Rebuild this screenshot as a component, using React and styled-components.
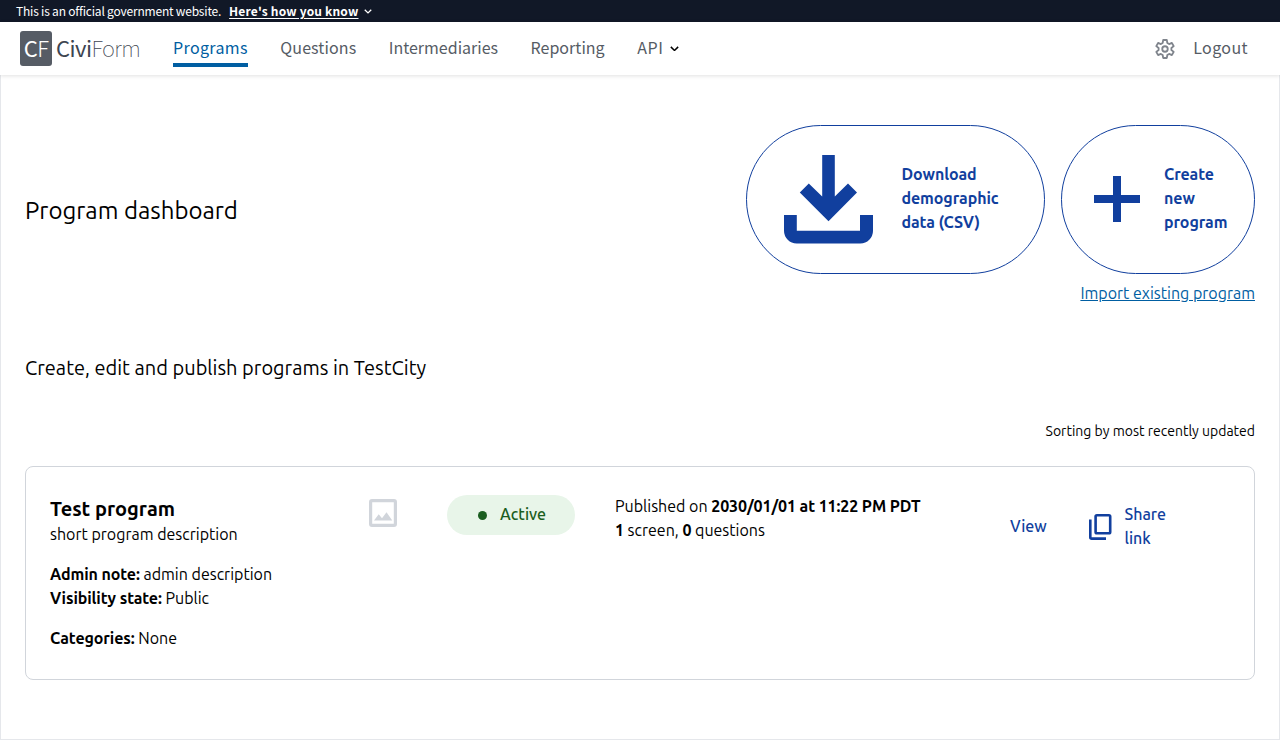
import React from "react";
import styled, { createGlobalStyle } from "styled-components";

const GlobalStyle = createGlobalStyle`
  *, *::before, *::after { box-sizing: border-box; }
  html { overflow: hidden; }
  body {
    margin: 0;
    background: #fff;
    color: #000;
    font-family: Ubuntu, "Noto Sans", sans-serif;
    font-size: 16px;
    line-height: 24px;
    white-space: nowrap;
  }
  svg { display: block; flex: none; }
  h1, h2, h3, p { margin: 0; font-weight: 400; }
`;

const sourceSans = `"Source Sans Pro", "Noto Sans CJK SC", sans-serif`;

const Page = styled.div`
  display: flex;
  flex-direction: column;
  height: 740px;
`;

const Banner = styled.div`
  display: flex;
  align-items: center;
  flex: none;
  height: 22px;
  padding: 0 16px;
  background: #111827;
  color: #fff;
  font-family: ${sourceSans};
  font-size: 12px;
  line-height: 20px;
  letter-spacing: -0.2px;

  svg { margin-top: 2px; }
`;

const BannerLink = styled.a`
  margin: 0 5px 0 8px;
  font-weight: 700;
  letter-spacing: 0.18px;
  text-decoration: underline;
  text-underline-offset: 2px;
`;

const Header = styled.header`
  position: relative;
  display: flex;
  align-items: center;
  flex: none;
  height: 53px;
  padding: 0 32px 0 20px;
  background: #fff;
  box-shadow: 0 1px 4px rgba(0, 0, 0, 0.12);
  font-family: ${sourceSans};
`;

const Logo = styled.div`
  display: flex;
  align-items: center;
  width: 153px;
  font-size: 22px;
  line-height: 33px;
  letter-spacing: -0.55px;
  color: #3d4551;
`;

const LogoBadge = styled.span`
  display: flex;
  justify-content: center;
  width: 32px;
  height: 35px;
  margin-right: 4px;
  border-radius: 3px;
  background: #565c65;
  color: #fff;
`;

const LogoText = styled.span`
  margin-top: -2px;
`;

const Thin = styled.span`
  font-weight: ${(p) => p.$weight || 100};
`;

const Nav = styled.nav`
  display: flex;
  flex: 1;
  gap: 32.5px;
`;

const NavItem = styled.a`
  display: flex;
  align-items: center;
  height: 38px;
  padding-top: 2px;
  margin-top: -1px;
  border-bottom: 4px solid ${(p) => (p.$active ? "#005ea2" : "transparent")};
  color: ${(p) => (p.$active ? "#005ea2" : "#565c65")};
  font-size: 16px;
  letter-spacing: ${(p) => p.$tracking || 0}px;

  svg { margin: 3px 0 0 2px; }
`;

const Account = styled.div`
  display: flex;
  align-items: center;
  gap: 17px;
`;

const Main = styled.main`
  flex: 1;
  padding: 42px 24px 0;
  border: 1px solid #e5e7eb;
  border-top: 0;
`;

const TitleRow = styled.div`
  display: flex;
  align-items: center;
  justify-content: space-between;
  height: 188px;
`;

const Title = styled.h1`
  margin-top: -1px;
  font-size: 24px;
  line-height: 32px;
`;

const Actions = styled.div`
  display: flex;
  flex-direction: column;
  align-items: flex-end;
  gap: 7px;
  padding-top: 8px;
`;

const ButtonGroup = styled.div`
  display: flex;
  gap: 16px;
`;

const PillButton = styled.button`
  display: flex;
  align-items: center;
  gap: ${(p) => p.$gap}px;
  width: ${(p) => p.$width}px;
  height: 149px;
  padding: 0 0 1px ${(p) => p.$inset}px;
  border: 1px solid #113f9e;
  border-radius: 75px;
  background: #fff;
  color: #113f9e;
  font: inherit;
  font-weight: 600;
  letter-spacing: -0.09px;
  text-align: left;
`;

const ButtonLabel = styled.span`
  padding-bottom: 2px;
`;

const ImportLink = styled.a`
  color: #005ea2;
  text-decoration: underline;
`;

const Subtitle = styled.h2`
  margin-top: 49px;
  font-size: 20px;
  line-height: 28px;
`;

const SortNote = styled.p`
  margin: 39px 0 25px;
  font-size: 14px;
  line-height: 20px;
  text-align: right;
`;

const Card = styled.article`
  display: flex;
  align-items: flex-start;
  height: 214px;
  padding: 28px 24px;
  border: 1px solid #d1d5db;
  border-radius: 8px;
`;

const Summary = styled.div`
  width: 319px;
`;

const ProgramName = styled.h3`
  && { margin-bottom: -1px; }
  font-size: 20px;
  font-weight: 600;
  line-height: 28px;
`;

const Block = styled.div`
  margin-top: ${(p) => p.$top || 0}px;
`;

const Strong = styled.b`
  font-weight: 600;
  letter-spacing: -0.1px;
`;

const Thumb = styled.div`
  width: 78px;
  padding-top: 4px;
`;

const Status = styled.div`
  display: flex;
  align-items: center;
  gap: 13.5px;
  width: 128px;
  height: 40px;
  padding: 0 0 2px 30.5px;
  margin-right: 40px;
  border-radius: 20px;
  background: #e8f5e9;
  color: #1b5e20;
  font-weight: 500;
`;

const Dot = styled.span`
  width: 9px;
  height: 9px;
  margin-top: 2px;
  border-radius: 50%;
  background: currentColor;
`;

const Published = styled.div`
  width: 395px;
  margin-top: -1px;
`;

const CardActions = styled.div`
  display: flex;
  align-items: center;
  padding-top: 7px;
  color: #113f9e;
  font-weight: 500;
`;

const ViewLink = styled.a`
  width: 79px;
`;

const ShareLink = styled.a`
  display: flex;
  align-items: center;
  gap: 12.5px;

  svg { margin-top: 2px; }
`;

const Chevron = ({ size, color }) => (
  <svg width={size} height={size * 0.66} viewBox="0 0 9 6" fill="none" stroke={color} strokeWidth="1.5">
    <path d="M0.8 0.9 4.5 4.5 8.2 0.9" />
  </svg>
);

const GearIcon = () => (
  <svg width="22" height="22" viewBox="0 0 24 24" fill="none" stroke="#7f848c" strokeWidth="2" strokeLinejoin="round">
    <path d="M10 2.2h4l.5 3.2 2 1.2 3-1.2 2 3.5-2.5 2v2.2l2.5 2-2 3.5-3-1.2-2 1.2-.5 3.2h-4l-.5-3.2-2-1.2-3 1.2-2-3.5 2.5-2v-2.2l-2.5-2 2-3.5 3 1.2 2-1.2z" />
    <circle cx="12" cy="12" r="3" />
  </svg>
);

const DownloadIcon = () => (
  <svg width="89" height="89" viewBox="0 0 89 89" fill="#113f9e">
    <path d="M38.2 0h12.6v41.5L64 28.5l9 9L44.5 66.3 15.8 37.5l9-9 13.4 13zM0 60h12.8v15.7H76V60h13v15.7a12.7 12.7 0 0 1-12.7 12.7H12.7A12.7 12.7 0 0 1 0 75.7z" />
  </svg>
);

const PlusIcon = () => (
  <svg width="46" height="46" viewBox="0 0 46 46" fill="#113f9e">
    <path d="M19 0h8v19h19v8H27v19h-8V27H0v-8h19z" />
  </svg>
);

const ImageIcon = () => (
  <svg width="28" height="28" viewBox="0 0 28 28" fill="#d1d5db">
    <path fillRule="evenodd" d="M3 0h22a3 3 0 0 1 3 3v22a3 3 0 0 1-3 3H3a3 3 0 0 1-3-3V3a3 3 0 0 1 3-3zm.2 3.2v21.6h21.6V3.2zM5 21.5l4.7-6.2 3.3 4 4.5-6.1L23.3 21.5z" />
  </svg>
);

const CopyIcon = () => (
  <svg width="23" height="26" viewBox="0 0 23 26" fill="none" stroke="#113f9e" strokeWidth="2.6">
    <rect x="6.6" y="1.3" width="14.6" height="18" rx="1.3" />
    <path d="M1.3 5.5v17.7q0 1.4 1.4 1.4h14.3" />
  </svg>
);

export default function App() {
  return (
    <Page>
      <GlobalStyle />
      <Banner>
        <span>This is an official government website.</span>
        <BannerLink>Here's how you know</BannerLink>
        <Chevron size={8} color="#fff" />
      </Banner>
      <Header>
        <Logo>
          <LogoBadge>C<Thin $weight={300}>F</Thin></LogoBadge>
          <LogoText>Civi<Thin>Form</Thin></LogoText>
        </Logo>
        <Nav>
          <NavItem $active $tracking={0.36}>Programs</NavItem>
          <NavItem $tracking={0.1}>Questions</NavItem>
          <NavItem>Intermediaries</NavItem>
          <NavItem $tracking={0.03}>Reporting</NavItem>
          <NavItem $tracking={0.6}>API&nbsp;<Chevron size={9} color="#000" /></NavItem>
        </Nav>
        <Account>
          <GearIcon />
          <NavItem $tracking={0.4}>Logout</NavItem>
        </Account>
      </Header>
      <Main>
        <TitleRow>
          <Title>Program dashboard</Title>
          <Actions>
            <ButtonGroup>
              <PillButton $width={299} $inset={37} $gap={28.5}>
                <DownloadIcon />
                <ButtonLabel>Download<br />demographic<br />data (CSV)</ButtonLabel>
              </PillButton>
              <PillButton $width={194} $inset={32} $gap={24}>
                <PlusIcon />
                <ButtonLabel>Create<br />new<br />program</ButtonLabel>
              </PillButton>
            </ButtonGroup>
            <ImportLink>Import existing program</ImportLink>
          </Actions>
        </TitleRow>
        <Subtitle>Create, edit and publish programs in TestCity</Subtitle>
        <SortNote>Sorting by most recently updated</SortNote>
        <Card>
          <Summary>
            <ProgramName>Test program</ProgramName>
            <Block>short program description</Block>
            <Block $top={16}><Strong>Admin note:</Strong> admin description</Block>
            <Block><Strong>Visibility state:</Strong> Public</Block>
            <Block $top={16}><Strong>Categories:</Strong> None</Block>
          </Summary>
          <Thumb><ImageIcon /></Thumb>
          <Status><Dot />Active</Status>
          <Published>
            <Block>Published on <Strong>2030/01/01 at 11:22 PM PDT</Strong></Block>
            <Block><Strong>1</Strong> screen, <Strong>0</Strong> questions</Block>
          </Published>
          <CardActions>
            <ViewLink>View</ViewLink>
            <ShareLink>
              <CopyIcon />
              <span>Share<br />link</span>
            </ShareLink>
          </CardActions>
        </Card>
      </Main>
    </Page>
  );
}
